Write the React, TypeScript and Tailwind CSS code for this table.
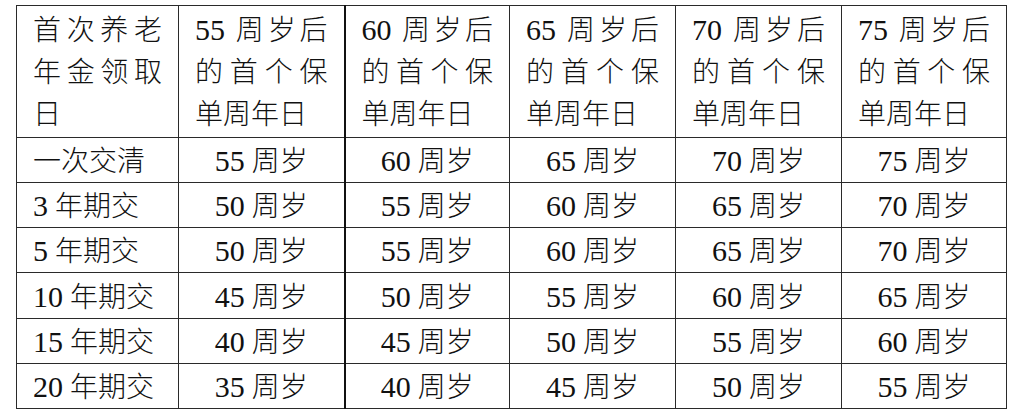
import React from "react";

const font = {
  fontFamily: '"Liberation Serif", "Noto Sans CJK SC", serif',
};

const heads = ["55", "60", "65", "70", "75"];
const rows: [string | null, string, string[]][] = [
  [null, "一次交清", ["55", "60", "65", "70", "75"]],
  ["3", "年期交", ["50", "55", "60", "65", "70"]],
  ["5", "年期交", ["50", "55", "60", "65", "70"]],
  ["10", "年期交", ["45", "50", "55", "60", "65"]],
  ["15", "年期交", ["40", "45", "50", "55", "60"]],
  ["20", "年期交", ["35", "40", "45", "50", "55"]],
];

const widths = [162, 166, 165, 166, 166, 165];

function Num({ v }: { v: string }) {
  return <span className="text-[30px] leading-[0px] font-normal">{v}</span>;
}

export default function App() {
  return (
    <div className="w-[1010px] h-[411px] bg-white overflow-hidden" style={font}>
      <table className="ml-[16px] mt-[5px] border-collapse table-fixed text-[28px] font-light text-[#111]" style={{ width: 991 }}>
        <colgroup>
          {widths.map((w, i) => (
            <col key={i} style={{ width: w }} />
          ))}
        </colgroup>
        <thead>
          <tr>
            <th className="h-[132px] border border-[#2a2a2a] align-top text-justify font-light px-4 pt-[4px] pb-0 leading-[42px]">
              首次养老年金领取日
            </th>
            {heads.map((h, i) => (
              <th
                key={h}
                className={`h-[132px] border border-[#2a2a2a] align-top text-justify font-light px-4 pt-[4px] pb-0 leading-[42px] ${
                  i === 0 ? "border-r-2 border-r-[#111]" : ""
                }`}
              >
                <Num v={h} /> 周岁后的首个保单周年日
              </th>
            ))}
          </tr>
        </thead>
        <tbody>
          {rows.map(([n, label, vals], r) => (
            <tr key={r}>
              <td className={`${r === 3 ? "h-[46px]" : "h-[45px]"} border border-[#2a2a2a] px-4 pt-[4px] pb-0 leading-[40px] whitespace-nowrap`}>
                {n !== null && (
                  <>
                    <Num v={n} />{" "}
                  </>
                )}
                {label}
              </td>
              {vals.map((v, i) => (
                <td
                  key={i}
                  className={`border border-[#2a2a2a] text-center pt-[4px] pb-0 leading-[40px] whitespace-nowrap ${
                    i === 0 ? "border-r-2 border-r-[#111]" : ""
                  }`}
                >
                  <Num v={v} /> 周岁
                </td>
              ))}
            </tr>
          ))}
        </tbody>
      </table>
    </div>
  );
}
